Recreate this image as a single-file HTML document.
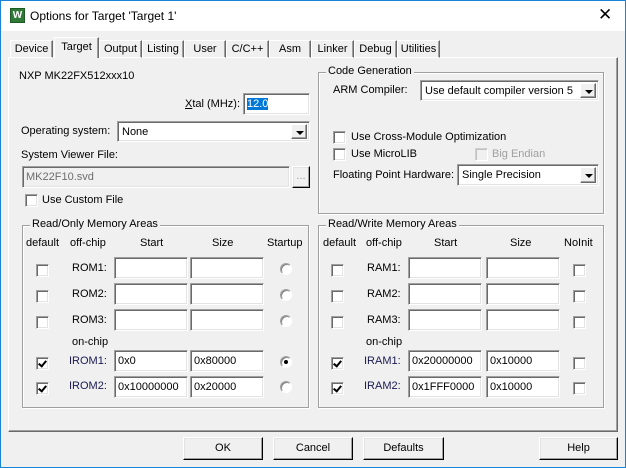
<!DOCTYPE html>
<html><head><meta charset="utf-8"><style>
*{box-sizing:border-box;margin:0;padding:0}
body{width:626px;height:468px;overflow:hidden;font-family:"Liberation Sans",Arial,sans-serif;font-size:11px;color:#000;background:#f0f0f0;position:relative}
.a{position:absolute;white-space:nowrap}
.win{position:absolute;left:0;top:0;width:626px;height:468px;border:1px solid #1883d7}
.title{position:absolute;left:1px;top:1px;width:624px;height:30px;background:#fff}
.inp{position:absolute;background:#fff;border:1px solid;border-color:#a0a0a0 #fff #fff #a0a0a0;box-shadow:inset 1px 1px #696969,inset -1px -1px #e3e3e3;padding:3px 3px;line-height:14px;overflow:hidden}
.dis{background:#f0f0f0;color:#6d6d6d}
.sel{position:absolute;background:#fff;border:1px solid;border-color:#a0a0a0 #fff #fff #a0a0a0;box-shadow:inset 1px 1px #696969,inset -1px -1px #e3e3e3;padding:3px 4px;line-height:14px}
.arr{position:absolute;right:2px;top:2px;bottom:2px;width:16px;background:#f0f0f0;border:1px solid;border-color:#fff #696969 #696969 #fff;box-shadow:inset -1px -1px #a0a0a0}
.arr:after{content:"";position:absolute;left:4px;top:6px;border-left:4px solid transparent;border-right:4px solid transparent;border-top:4px solid #000}
.cb{position:absolute;width:13px;height:13px;background:#fff;border:1px solid;border-color:#a0a0a0 #fff #fff #a0a0a0;box-shadow:inset 1px 1px #696969,inset -1px -1px #e3e3e3}
.cb.on:after{content:"";position:absolute;left:3px;top:1px;width:3px;height:6px;border-right:2px solid #000;border-bottom:2px solid #000;transform:rotate(40deg)}
.cb.d{background:#f0f0f0;border-color:#d0d0d0 #fff #fff #d0d0d0;box-shadow:inset 1px 1px #c0c0c0}
.rd{position:absolute;width:12px;height:12px;border-radius:50%;border:1px solid #a0a0a0;border-right-color:#fff;border-bottom-color:#fff;background:#fff;box-shadow:inset 1px 1px #808080}
.rd.on:after{content:"";position:absolute;left:3px;top:3px;width:4px;height:4px;border-radius:50%;background:#000}
.grp{position:absolute;border:1px solid #a0a0a0;box-shadow:1px 1px #fff,inset 1px 1px #fff}
.gt{position:absolute;background:#f0f0f0;padding:0 2px;top:-8px;left:7px}
.btn{position:absolute;height:23px;background:#f0f0f0;border:1px solid;border-color:#fff #000 #000 #fff;box-shadow:inset -1px -1px #a0a0a0,inset 1px 1px #e3e3e3;text-align:center;line-height:20px}
.tab{position:absolute;top:40px;height:18px;border:1px solid;border-color:#fff #696969 transparent #fff;box-shadow:inset -1px 0 #a0a0a0;text-align:center;line-height:16px}
.nv{color:#1a1a50}
</style></head><body>
<div class="win"></div>
<div class="title">
<div class="a" style="left:9px;top:7px;width:15px;height:15px;background:#2f7a37;border:1px solid #1f5a25;color:#fff;font-size:10px;font-weight:bold;line-height:13px;text-align:center">W</div>
<div class="a" style="left:29px;top:8px;font-size:12px">Options for Target 'Target 1'</div>
<div class="a" style="left:597px;top:4px;font-size:17px;font-weight:300">✕</div>
</div>
<div class="a" style="left:8px;top:57px;width:610px;height:375px;border:1px solid;border-color:#fff #696969 #696969 #fff;box-shadow:inset -1px -1px #a0a0a0"></div>
<div class="tab" style="left:10px;width:43px">Device</div>
<div class="tab" style="left:54px;width:45px;top:37px;height:21px;background:#f0f0f0;border-bottom:none;z-index:2;line-height:18px">Target</div>
<div class="tab" style="left:99px;width:43px">Output</div>
<div class="tab" style="left:142px;width:42px">Listing</div>
<div class="tab" style="left:184px;width:42px">User</div>
<div class="tab" style="left:226px;width:43px">C/C++</div>
<div class="tab" style="left:269px;width:42px">Asm</div>
<div class="tab" style="left:311px;width:43px">Linker</div>
<div class="tab" style="left:354px;width:43px">Debug</div>
<div class="tab" style="left:397px;width:43px">Utilities</div>

<div class="a" style="left:19px;top:70px">NXP MK22FX512xxx10</div>
<div class="a" style="left:185px;top:98px"><u>X</u>tal (MHz):</div>
<div class="inp" style="left:243px;top:93px;width:67px;height:22px"><span style="background:#0078d7;color:#fff">12.0</span></div>
<div class="a" style="left:21px;top:125px">Operating system:</div>
<div class="sel" style="left:117px;top:121px;width:193px;height:21px">None<div class="arr"></div></div>
<div class="a" style="left:21px;top:149px">System Viewer File:</div>
<div class="inp dis" style="left:22px;top:166px;width:268px;height:22px">MK22F10.svd</div>
<div class="btn" style="left:292px;top:166px;width:18px;height:22px;color:#999;line-height:18px">...</div>
<div class="cb" style="left:25px;top:194px"></div>
<div class="a" style="left:42px;top:194px">Use Custom File</div>

<div class="grp" style="left:318px;top:72px;width:286px;height:142px"><div class="gt">Code Generation</div></div>
<div class="a" style="left:333px;top:84px">ARM Compiler:</div>
<div class="sel" style="left:420px;top:80px;width:179px;height:21px">Use default compiler version 5<div class="arr"></div></div>
<div class="cb" style="left:333px;top:131px"></div>
<div class="a" style="left:351px;top:131px">Use Cross-Module Optimization</div>
<div class="cb" style="left:333px;top:148px"></div>
<div class="a" style="left:351px;top:148px">Use MicroLIB</div>
<div class="cb d" style="left:475px;top:148px"></div>
<div class="a" style="left:492px;top:148px;color:#a0a0a0">Big Endian</div>
<div class="a" style="left:333px;top:169px">Floating Point Hardware:</div>
<div class="sel" style="left:457px;top:164px;width:142px;height:22px">Single Precision<div class="arr"></div></div>

<div class="grp" style="left:22px;top:225px;width:287px;height:183px"><div class="gt" style="left:7px">Read/Only Memory Areas</div></div>
<div class="a" style="left:26px;top:237px">default</div>
<div class="a" style="left:70px;top:237px">off-chip</div>
<div class="a" style="left:140px;top:237px">Start</div>
<div class="a" style="left:212px;top:237px">Size</div>
<div class="a" style="left:267px;top:237px">Startup</div>
<div class="cb" style="left:36px;top:264px"></div><div class="a" style="left:72px;top:262px">ROM1:</div>
<div class="inp" style="left:114px;top:257px;width:74px;height:22px"></div><div class="inp" style="left:190px;top:257px;width:74px;height:22px"></div><div class="rd" style="left:280px;top:263px"></div>
<div class="cb" style="left:36px;top:290px"></div><div class="a" style="left:72px;top:288px">ROM2:</div>
<div class="inp" style="left:114px;top:283px;width:74px;height:22px"></div><div class="inp" style="left:190px;top:283px;width:74px;height:22px"></div><div class="rd" style="left:280px;top:289px"></div>
<div class="cb" style="left:36px;top:316px"></div><div class="a" style="left:72px;top:314px">ROM3:</div>
<div class="inp" style="left:114px;top:309px;width:74px;height:22px"></div><div class="inp" style="left:190px;top:309px;width:74px;height:22px"></div><div class="rd" style="left:280px;top:315px"></div>
<div class="a" style="left:72px;top:336px">on-chip</div>
<div class="cb on" style="left:36px;top:357px"></div><div class="a nv" style="left:69px;top:355px">IROM1:</div>
<div class="inp" style="left:114px;top:350px;width:74px;height:22px">0x0</div><div class="inp" style="left:190px;top:350px;width:74px;height:22px">0x80000</div><div class="rd on" style="left:280px;top:356px"></div>
<div class="cb on" style="left:36px;top:382px"></div><div class="a nv" style="left:69px;top:380px">IROM2:</div>
<div class="inp" style="left:114px;top:376px;width:74px;height:22px">0x10000000</div><div class="inp" style="left:190px;top:376px;width:74px;height:22px">0x20000</div><div class="rd" style="left:280px;top:381px"></div>

<div class="grp" style="left:318px;top:225px;width:286px;height:183px"><div class="gt">Read/Write Memory Areas</div></div>
<div class="a" style="left:323px;top:237px">default</div>
<div class="a" style="left:366px;top:237px">off-chip</div>
<div class="a" style="left:434px;top:237px">Start</div>
<div class="a" style="left:510px;top:237px">Size</div>
<div class="a" style="left:564px;top:237px">NoInit</div>
<div class="cb" style="left:331px;top:264px"></div><div class="a" style="left:367px;top:262px">RAM1:</div>
<div class="inp" style="left:408px;top:257px;width:74px;height:22px"></div><div class="inp" style="left:486px;top:257px;width:74px;height:22px"></div><div class="cb" style="left:573px;top:264px"></div>
<div class="cb" style="left:331px;top:290px"></div><div class="a" style="left:367px;top:288px">RAM2:</div>
<div class="inp" style="left:408px;top:283px;width:74px;height:22px"></div><div class="inp" style="left:486px;top:283px;width:74px;height:22px"></div><div class="cb" style="left:573px;top:290px"></div>
<div class="cb" style="left:331px;top:316px"></div><div class="a" style="left:367px;top:314px">RAM3:</div>
<div class="inp" style="left:408px;top:309px;width:74px;height:22px"></div><div class="inp" style="left:486px;top:309px;width:74px;height:22px"></div><div class="cb" style="left:573px;top:316px"></div>
<div class="a" style="left:366px;top:336px">on-chip</div>
<div class="cb on" style="left:331px;top:357px"></div><div class="a nv" style="left:364px;top:355px">IRAM1:</div>
<div class="inp" style="left:408px;top:350px;width:74px;height:22px">0x20000000</div><div class="inp" style="left:486px;top:350px;width:74px;height:22px">0x10000</div><div class="cb" style="left:573px;top:357px"></div>
<div class="cb on" style="left:331px;top:382px"></div><div class="a nv" style="left:364px;top:380px">IRAM2:</div>
<div class="inp" style="left:408px;top:376px;width:74px;height:22px">0x1FFF0000</div><div class="inp" style="left:486px;top:376px;width:74px;height:22px">0x10000</div><div class="cb" style="left:573px;top:382px"></div>

<div class="btn" style="left:183px;top:437px;width:80px">OK</div>
<div class="btn" style="left:273px;top:437px;width:80px">Cancel</div>
<div class="btn" style="left:363px;top:437px;width:81px">Defaults</div>
<div class="btn" style="left:539px;top:437px;width:79px">Help</div>
</body></html>
